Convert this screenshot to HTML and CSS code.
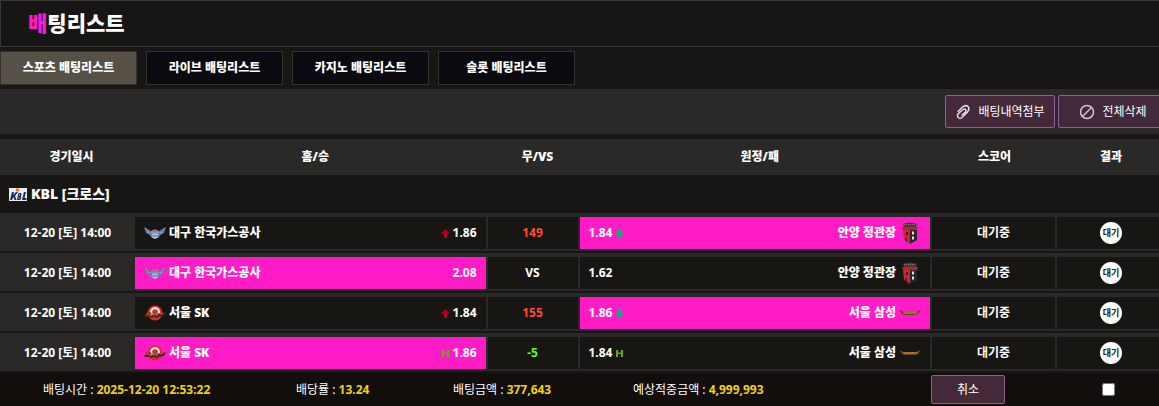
FILE: index.html
```html
<!DOCTYPE html>
<html lang="ko">
<head>
    <meta charset="UTF-8">
    <meta name="viewport" content="width=device-width, initial-scale=1.0">
    <title>배팅리스트</title>
    <link rel="stylesheet" href="styles.css">
</head>
<body>
    <!-- Shared logos and arrows -->
    <svg class="sprite" aria-hidden="true">
        <symbol id="logo-kbl" viewBox="0 0 18 13">
            <rect width="18" height="13" fill="#e9edf2"/>
            <path d="M1 12L3 4h2L4.300 7 7 4h2L6 8l1.500 4h-2L4.300 9 3 12z" fill="#1d2c5e"/>
            <path d="M8 12l1.400-7h2.400q1.500 1 .2 3 1 2-.8 4zM13 12l2-8h2l-1.500 6h2.200l-.4 2z" fill="#1d2c5e"/>
            <path d="M10 7h1M9.600 10h1" stroke="#e9edf2"/>
            <circle cx="8.500" cy="2" r="1.800" fill="#ee6b2d"/>
        </symbol>
        <symbol id="logo-pegasus" viewBox="0 0 22 14">
            <path d="M0 1l7 4h8l7-4-2 6-4 2-2 3H8L6 9 2 7z" fill="#65719f"/>
            <path d="M1 2l5 5 3 1M21 2l-5 5-3 1M3 6l4 3M19 6l-4 3" stroke="#8c9ac8" fill="none"/>
            <circle cx="11" cy="8" r="4.600" fill="#8d99bd"/>
            <path d="M7.500 6q3.500-4 7 0z" fill="#c76555"/>
            <path d="M6 7h10v2.500H6z" fill="#4d86bd"/>
            <path d="M8 8.200h6" stroke="#d4dfed"/>
            <path d="M8 11h6l-3 2z" fill="#bcc1d0"/>
        </symbol>
        <symbol id="logo-knights" viewBox="0 0 22 16">
            <circle cx="11" cy="8" r="7.500" fill="#d52c31"/>
            <circle cx="11" cy="7" r="5" fill="#eee3dc"/>
            <circle cx="11" cy="7" r="2.800" fill="#c8302e"/>
            <path d="M0 12l3-5 1 2 3-2v3l3-1 2 1 3-2 1 1 6-2-2 4-5 1-2 1-3-1-3 1-2-1z" fill="#552519"/>
            <path d="M2 10l2-2M4 9l3 2M7 8v3M10 9v2M13 9v2M16 9l3-1" stroke="#c9623a" fill="none"/>
        </symbol>
        <symbol id="logo-redboosters" viewBox="0 0 16 22">
            <path d="M1 2q7-3 14 0l-1 3H2z" fill="#443b3c"/>
            <path d="M2 2.500h12" stroke="#8b7376" stroke-dasharray="1 1"/>
            <path d="M0 5h16l-1 3H1z" fill="#b9222d"/>
            <path d="M1 8h7v14l-6-4z" fill="#d0232d"/>
            <path d="M8 8h7v10l-7 4z" fill="#28272d"/>
            <path d="M4 10h2v3H4zM4 15l1.500 5L3 18.500z" fill="#3a1a20"/>
            <path d="M10 9.500h2v3h-2zM10 14.500h2v3h-2z" fill="#e6dfe1"/>
        </symbol>
        <symbol id="logo-thunders" viewBox="0 0 22 6">
            <path d="M0 0l5 2h12l5-2-3 4-4 1H6L3 4z" fill="#5f4628"/>
            <path d="M4 3l2-1v2l2-2v2l2-2v2l2-2v2l2-2v2l2-2v2l3-2" fill="none" stroke="#c98d2e" stroke-width=".8"/>
        </symbol>
        <symbol id="arrow-up" viewBox="0 0 9 9">
            <path d="M4.500 0L9 4.500H6V9H3V4.500H0z"/>
        </symbol>
        <symbol id="arrow-down" viewBox="0 0 9 9">
            <path d="M4.500 9L9 4.500H6V0H3v4.500H0z"/>
        </symbol>
        <symbol id="handicap" viewBox="0 0 9 9">
            <path d="M1 1h2v2.500h3V1h2v7H6V5H3v3H1z"/>
        </symbol>
    </svg>

    <header class="pageTitle">
        <h1><span class="point">배</span>팅리스트</h1>
    </header>

    <nav class="tabs">
        <a href="#sports" class="tab active">스포츠 배팅리스트</a>
        <a href="#live" class="tab">라이브 배팅리스트</a>
        <a href="#casino" class="tab">카지노 배팅리스트</a>
        <a href="#slot" class="tab">슬롯 배팅리스트</a>
    </nav>

    <div class="toolbar">
        <button type="button" class="button toolButton">
            <svg class="toolIcon" viewBox="0 0 16 16"><path d="M3 7.500L7.500 3q3-2.500 5.500-.5 2 2.500-.5 5.500L7 13.500q-2 1.500-3.700 0t0-3.700L8 5.500q1.500-1 2.500 0t0 2.500L7 11" fill="none" stroke="#e4dce2" stroke-width="1.500" stroke-linecap="round"/></svg>
            배팅내역첨부
        </button>
        <button type="button" class="button toolButton">
            <svg class="toolIcon" viewBox="0 0 16 16"><circle cx="8" cy="8" r="6.500" fill="none" stroke="#d3c8d0" stroke-width="1.500"/><path d="M3.500 12.500l9-9" stroke="#d3c8d0" stroke-width="1.500"/></svg>
            전체삭제
        </button>
    </div>

    <table class="betTable">
        <colgroup>
            <col class="colDate">
            <col>
            <col class="colDraw">
            <col>
            <col class="colScore">
            <col class="colResult">
        </colgroup>
        <thead>
            <tr>
                <th class="shift">경기일시</th>
                <th class="shift">홈/승</th>
                <th class="shift">무/VS</th>
                <th class="shift">원정/패</th>
                <th>스코어</th>
                <th>결과</th>
            </tr>
        </thead>
        <tbody>
            <tr class="league">
                <td colspan="6">
                    <div class="leagueName"><svg class="leagueLogo"><use href="#logo-kbl"/></svg>KBL [크로스]</div>
                </td>
            </tr>
            <tr class="game">
                <td>12-20 [토] 14:00</td>
                <td><div class="cell team"><svg class="logo"><use href="#logo-pegasus"/></svg><span class="name">대구 한국가스공사</span><svg class="mark up"><use href="#arrow-up"/></svg><span>1.86</span></div></td>
                <td><div class="cell over">149</div></td>
                <td><div class="cell team selected"><span>1.84</span><svg class="mark down"><use href="#arrow-down"/></svg><span class="name away">안양 정관장</span><svg class="logo"><use href="#logo-redboosters"/></svg></div></td>
                <td><div class="cell">대기중</div></td>
                <td><div class="cell last"><span class="badge">대기</span></div></td>
            </tr>
            <tr class="game">
                <td>12-20 [토] 14:00</td>
                <td><div class="cell team selected"><svg class="logo"><use href="#logo-pegasus"/></svg><span class="name">대구 한국가스공사</span><span>2.08</span></div></td>
                <td><div class="cell">VS</div></td>
                <td><div class="cell team"><span>1.62</span><span class="name away">안양 정관장</span><svg class="logo"><use href="#logo-redboosters"/></svg></div></td>
                <td><div class="cell">대기중</div></td>
                <td><div class="cell last"><span class="badge">대기</span></div></td>
            </tr>
            <tr class="game">
                <td>12-20 [토] 14:00</td>
                <td><div class="cell team"><svg class="logo"><use href="#logo-knights"/></svg><span class="name">서울 SK</span><svg class="mark up"><use href="#arrow-up"/></svg><span>1.84</span></div></td>
                <td><div class="cell over">155</div></td>
                <td><div class="cell team selected"><span>1.86</span><svg class="mark down"><use href="#arrow-down"/></svg><span class="name away">서울 삼성</span><svg class="logo"><use href="#logo-thunders"/></svg></div></td>
                <td><div class="cell">대기중</div></td>
                <td><div class="cell last"><span class="badge">대기</span></div></td>
            </tr>
            <tr class="game">
                <td>12-20 [토] 14:00</td>
                <td><div class="cell team selected"><svg class="logo"><use href="#logo-knights"/></svg><span class="name">서울 SK</span><svg class="mark handi"><use href="#handicap"/></svg><span>1.86</span></div></td>
                <td><div class="cell minus">-5</div></td>
                <td><div class="cell team"><span>1.84</span><svg class="mark handi"><use href="#handicap"/></svg><span class="name away">서울 삼성</span><svg class="logo"><use href="#logo-thunders"/></svg></div></td>
                <td><div class="cell">대기중</div></td>
                <td><div class="cell last"><span class="badge">대기</span></div></td>
            </tr>
        </tbody>
    </table>

    <div class="summary">
        <div>배팅시간 : <b>2025-12-20 12:53:22</b></div>
        <div>배당률 : <b>13.24</b></div>
        <div>배팅금액 : <b>377,643</b></div>
        <div>예상적중금액 : <b>4,999,993</b></div>
        <button type="button" class="button cancelButton">취소</button>
        <input type="checkbox" class="check" aria-label="배팅 선택">
    </div>
</body>
</html>
```
FILE: styles.css
```css
* {
    box-sizing: border-box;
}
body {
    margin: 0;
    padding: 0;
    background-color: #171614;
    color: #fff;
    font-family: "Noto Sans", "Noto Sans CJK KR", sans-serif;
    font-size: 12px;
    line-height: 16px;
    overflow-x: hidden;
}
.sprite {
    display: none;
}
.pageTitle {
    border: 1px solid #383735;
    border-right: 0;
    padding: 8px 27px;
}
.pageTitle h1 {
    margin: 0;
    font-size: 21px;
    line-height: 29px;
    font-weight: 900;
}
.point {
    color: #ff1cc6;
}
.tabs {
    display: flex;
    gap: 9px;
    padding: 4px 0;
}
.tab {
    width: 137px;
    padding: 8px 0;
    border: 1px solid #33322f;
    background-color: #0b0a10;
    color: #fff;
    font-weight: 900;
    text-align: center;
    text-decoration: none;
}
.tab.active {
    background-color: #575047;
}
.toolbar {
    display: flex;
    justify-content: flex-end;
    gap: 3px;
    padding: 6px 0;
    margin-right: -9px;
    margin-bottom: 5px;
    background-color: #2a2927;
}
.button {
    border: 1px solid #8d6192;
    border-radius: 2px;
    background-color: #432939;
    color: #fff;
    font-family: inherit;
    font-size: 12px;
    line-height: 16px;
    padding: 0;
}
.toolButton {
    display: flex;
    align-items: center;
    justify-content: center;
    gap: 7px;
    width: 110px;
    height: 33px;
}
.toolIcon {
    width: 16px;
    height: 16px;
}

/* Betting table, result column runs a little past the right edge */
.betTable {
    width: calc(100% + 6px);
    table-layout: fixed;
    border-collapse: collapse;
    font-weight: 700;
    text-align: center;
}
.colDate {
    width: 135px;
}
.colDraw {
    width: 92px;
}
.colScore {
    width: 125px;
}
.colResult {
    width: 108px;
}
.betTable th {
    height: 36px;
    padding: 0;
    background-color: #2a2927;
    font-weight: 900;
}
.betTable .shift {
    padding-left: 8px;
}
.league td {
    height: 38px;
    padding: 0 9px;
}
.leagueName {
    display: flex;
    align-items: center;
    gap: 4px;
    font-size: 14px;
    line-height: 20px;
    font-weight: 900;
}
.leagueLogo {
    width: 18px;
    height: 13px;
}
.game {
    background-color: #2a2927;
}
.game td {
    padding: 4px 0 2px;
    border-bottom: 2px solid #171614;
}
.cell {
    display: flex;
    align-items: center;
    justify-content: center;
    height: 32px;
    margin-right: 2px;
    background-color: #171612;
}
.cell.last {
    margin-right: 0;
}
.team {
    padding: 0 9px;
    gap: 3px;
}
.selected {
    background-color: #ff1cc6;
}
.name {
    flex: 1;
    text-align: left;
    font-weight: 900;
}
.name.away {
    text-align: right;
}
.logo {
    width: 22px;
    height: 22px;
}
.mark {
    width: 9px;
    height: 9px;
}
.up {
    fill: #b5001f;
}
.down {
    fill: #08b47b;
}
.handi {
    fill: #64a812;
}
.over {
    color: #ff4a32;
}
.minus {
    color: #5cff10;
}
.badge {
    width: 22px;
    height: 22px;
    border-radius: 50%;
    background-color: #fff;
    color: #222;
    font-size: 9px;
    line-height: 22px;
}

/* Ticket totals */
.summary {
    display: grid;
    grid-template-columns: 253fr 157fr 180fr 298fr 126px 102px;
    align-items: center;
    padding: 2px 0 2px 43px;
    background-color: #120e0b;
}
.summary b {
    color: #f0d010;
}
.cancelButton {
    width: 74px;
    height: 29px;
}
.check {
    justify-self: center;
    width: 13px;
    height: 13px;
    margin: 0;
}
```
